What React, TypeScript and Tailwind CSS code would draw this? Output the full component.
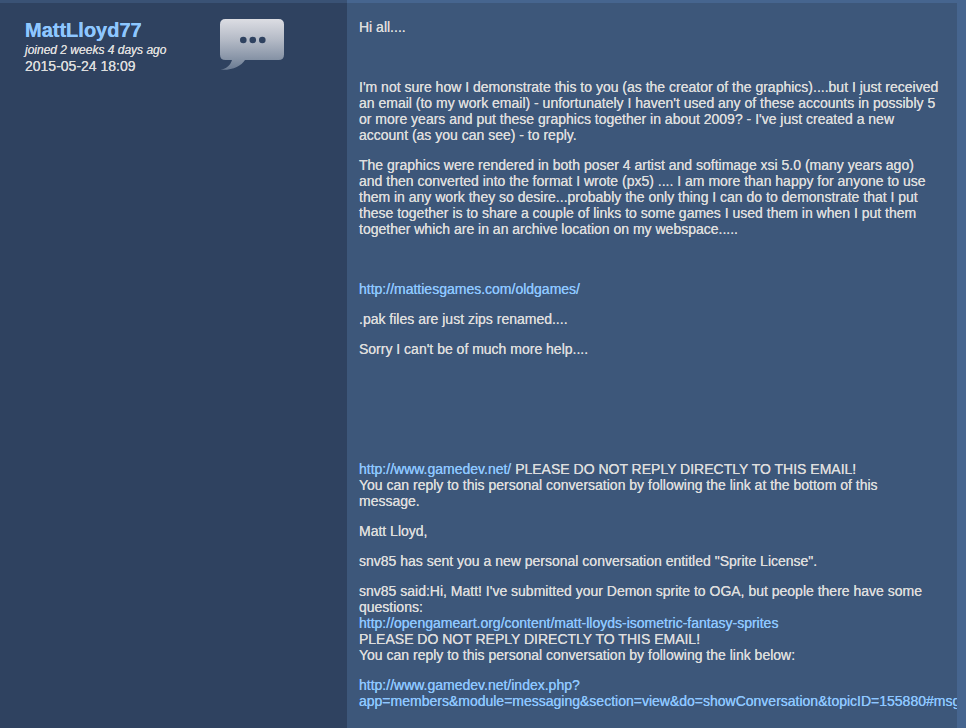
import type { ReactNode } from "react";

function Gap() {
  return <p>&nbsp;</p>;
}

function Link({ href, children }: { href: string; children: ReactNode }) {
  return (
    <a href={href} className="text-[#8ec7ff] [text-shadow:0_0_0_#8ec7ff] hover:underline">
      {children}
    </a>
  );
}

function SpeechBubble() {
  return (
    <svg className="h-[52px] w-16 shrink-0" viewBox="0 0 64 52" role="img" aria-label="Comment">
      <defs>
        <linearGradient id="bubble" gradientUnits="userSpaceOnUse" x1="0" y1="0" x2="0" y2="52">
          <stop offset="0" stopColor="#dcdde3" />
          <stop offset="0.4" stopColor="#b4bac6" />
          <stop offset="0.78" stopColor="#8592a5" />
          <stop offset="1" stopColor="#66778f" />
        </linearGradient>
      </defs>
      <path
        fill="url(#bubble)"
        d="M5.500 0H58.500Q64 0 64 5.500V35.500Q64 41 58.500 41H25C21 47 13 51.500 0.500 50.800C7 49.500 10.500 46 12 41H5.500Q0 41 0 35.500V5.500Q0 0 5.500 0Z"
      />
      <g fill="#2f4260">
        <circle cx="23.300" cy="21" r="3.300" />
        <circle cx="32.800" cy="21" r="3.300" />
        <circle cx="42.300" cy="21" r="3.300" />
      </g>
    </svg>
  );
}

export default function App() {
  return (
    <div className="min-h-screen bg-[#46658f] font-['Liberation_Sans',Arial,sans-serif] text-sm leading-4 text-[#dddddd] [text-shadow:0_0_0_#dddddd]">
      <article className="flex min-h-screen pr-[9px]">
        <aside className="w-[347px] shrink-0 border-t-3 border-[#3a5275] bg-[#2f4260] pt-4 pl-[25px]">
          <div className="flex">
            <header className="w-[195px]">
              <h2 className="mb-0.5 text-xl leading-[22px] font-bold">
                <Link href="#MattLloyd77">MattLloyd77</Link>
              </h2>
              <p className="text-xs leading-[15px] italic">joined 2 weeks 4 days ago</p>
              <time className="block" dateTime="2015-05-24T18:09">
                2015-05-24 18:09
              </time>
            </header>
            <SpeechBubble />
          </div>
        </aside>

        <section className="mt-[3px] flex min-w-0 flex-1 flex-col gap-3.5 overflow-hidden bg-[#3d577a] pt-4 pr-[18px] pb-3.5 pl-3">
          <p>Hi all....</p>
          <Gap />
          <p>
            I'm not sure how I demonstrate this to you (as the creator of the graphics)....but I just received
            an email (to my work email) - unfortunately I haven't used any of these accounts in possibly 5 or
            more years and put these graphics together in about 2009? - I've just created a new account (as you
            can see) - to reply.
          </p>
          <p>
            The graphics were rendered in both poser 4 artist and softimage xsi 5.0 (many years ago) and then
            converted into the format I wrote (px5) .... I am more than happy for anyone to use them in any work
            they so desire...probably the only thing I can do to demonstrate that I put these together is to
            share a couple of links to some games I used them in when I put them together which are in an
            archive location on my webspace.....
          </p>
          <Gap />
          <p>
            <Link href="http://mattiesgames.com/oldgames/">http://mattiesgames.com/oldgames/</Link>
          </p>
          <p>.pak files are just zips renamed....</p>
          <p>Sorry I can't be of much more help....</p>
          <Gap />
          <Gap />
          <Gap />
          <p>
            <Link href="http://www.gamedev.net/">http://www.gamedev.net/</Link> PLEASE DO NOT REPLY DIRECTLY TO
            THIS EMAIL!
            <br />
            You can reply to this personal conversation by following the link at the bottom of this message.
          </p>
          <p>Matt Lloyd,</p>
          <p>snv85 has sent you a new personal conversation entitled "Sprite License".</p>
          <p>
            snv85 said:Hi, Matt! I've submitted your Demon sprite to OGA, but people there have some questions:
            <br />
            <Link href="http://opengameart.org/content/matt-lloyds-isometric-fantasy-sprites">
              http://opengameart.org/content/matt-lloyds-isometric-fantasy-sprites
            </Link>
            <br />
            PLEASE DO NOT REPLY DIRECTLY TO THIS EMAIL!
            <br />
            You can reply to this personal conversation by following the link below:
          </p>
          <p className="whitespace-nowrap">
            <Link href="http://www.gamedev.net/index.php?app=members&module=messaging&section=view&do=showConversation&topicID=155880#msg">
              http://www.gamedev.net/index.php?
              <br />
              app=members&amp;module=messaging&amp;section=view&amp;do=showConversation&amp;topicID=155880#msg
            </Link>
          </p>
        </section>
      </article>
    </div>
  );
}
